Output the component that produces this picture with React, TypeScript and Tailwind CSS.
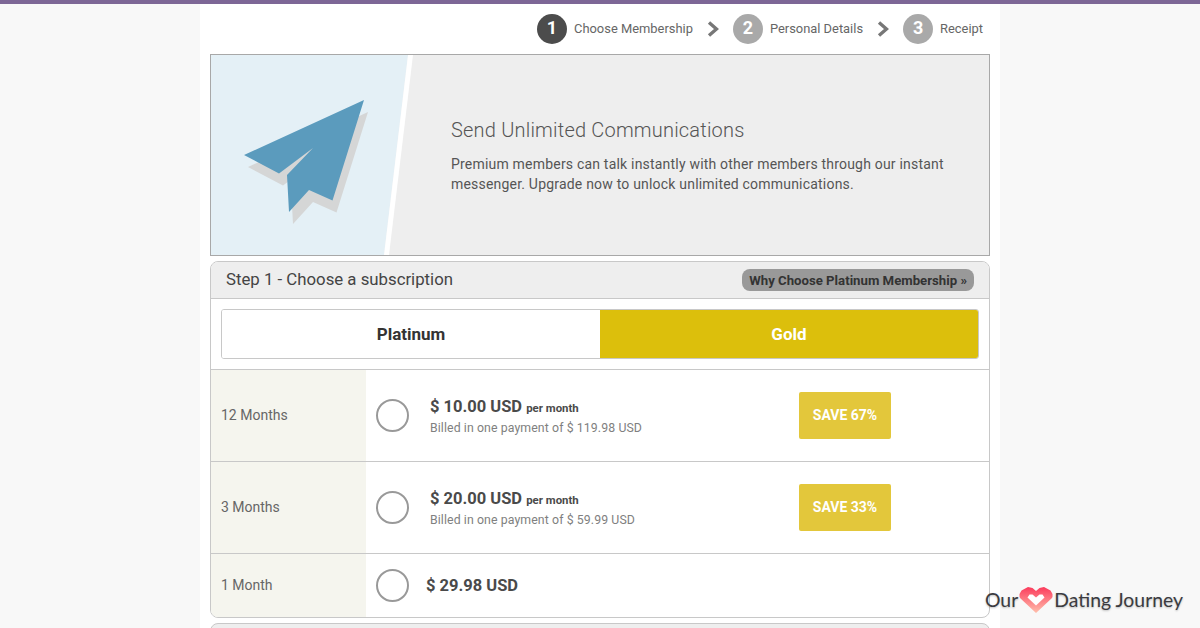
const steps = [
  { n: 1, label: 'Choose Membership', active: true },
  { n: 2, label: 'Personal Details', active: false },
  { n: 3, label: 'Receipt', active: false },
];

const plans = [
  { term: '12 Months', price: '$ 10.00 USD', billed: 'Billed in one payment of $ 119.98 USD', save: 'SAVE 67%' },
  { term: '3 Months', price: '$ 20.00 USD', billed: 'Billed in one payment of $ 59.99 USD', save: 'SAVE 33%' },
];

function Chevron() {
  return (
    <svg width="12" height="16" viewBox="0 0 12 16" className="mx-[14px]">
      <path d="M2 1.5 L9.5 8 L2 14.5" fill="none" stroke="#777" strokeWidth="3.4" />
    </svg>
  );
}

const planePath = 'M153 45 L33 100 L68 118.500 L102 93 L76 120 L78 157 L98 135 L121.500 145.500 Z';

function Plane() {
  return (
    <svg width="240" height="200" viewBox="0 0 240 200" className="shrink-0">
      <polygon points="0,0 197,0 173,200 0,200" fill="#e4f0f6" />
      <polygon points="197,0 202,0 178,200 173,200" fill="#fff" />
      <path d={planePath} fill="#d5d6d6" transform="translate(4 12)" />
      <path d={planePath} fill="#5b9bbd" />
    </svg>
  );
}

function Radio() {
  return <div className="w-[33px] h-[33px] rounded-full border-2 border-[#999] bg-white shrink-0" />;
}

function Logo() {
  return (
    <div className="absolute right-[17px] top-[581px] flex items-center font-['Lato',sans-serif] text-[19.4px] leading-[30px] text-[#3b3b40] [text-shadow:0_1px_2px_rgba(0,0,0,0.25)]">
      <span>Our</span>
      <svg width="34" height="28" viewBox="0 0 34 28" className="mx-[1px]">
        <defs>
          <linearGradient id="heart" x1="0" y1="0" x2="0" y2="1">
            <stop offset="0" stopColor="#fb3b5c" />
            <stop offset="1" stopColor="#ffc0ad" />
          </linearGradient>
        </defs>
        <path
          d="M17 27 L1.5 12.5 Q0 11 0.5 8 L2.5 4.5 L9 1 L13.5 2 L17 5 L20.5 2 L25 1 L31.5 4.5 L33.5 8 Q34 11 32.5 12.5 Z"
          fill="url(#heart)"
        />
        <path d="M17 19.5 L8.5 11.5 L10.5 8.5 L13.5 8.5 L17 11.5 L20.5 8.5 L23.5 8.5 L25.5 11.5 Z" fill="#fff" />
      </svg>
      <span>Dating Journey</span>
    </div>
  );
}

export default function App() {
  return (
    <div className="relative h-[628px] overflow-hidden bg-[#f8f8f8] border-t-4 border-[#7d6796] font-['Roboto',sans-serif] text-[#444]">
      <div className="w-[800px] h-full mx-auto bg-white px-[10px]">
        <div className="h-[50px] flex items-center justify-end pr-[7px]">
          {steps.map((s, i) => (
            <div key={s.n} className="flex items-center">
              {i > 0 && <Chevron />}
              <div
                className={`w-[30px] h-[30px] rounded-full flex items-center justify-center text-white text-[18px] font-bold leading-none pb-[3px] ${
                  s.active ? 'bg-[#4c4c4c]' : 'bg-[#a9a9a9]'
                }`}
              >
                {s.n}
              </div>
              <span className="ml-[7px] text-[12.9px] text-[#666]">{s.label}</span>
            </div>
          ))}
        </div>

        <div className="h-[202px] border border-[#a8a8a8] bg-[#eee] flex items-center">
          <Plane />
          <div className="pt-[2px]">
            <h2 className="text-[20px] font-light leading-[24px] text-[#555] tracking-[0.2px]">Send Unlimited Communications</h2>
            <p className="mt-[12px] w-[510px] text-[14px] leading-[20px] text-[#555] tracking-[0.2px]">
              Premium members can talk instantly with other members through our instant messenger. Upgrade now to unlock unlimited communications.
            </p>
          </div>
        </div>

        <div className="mt-[5px] h-[357px] border border-[#c8c8c8] rounded-[8px] overflow-hidden">
          <div className="h-[37px] bg-[#eee] border-b border-[#c8c8c8] flex items-center justify-between px-[15px]">
            <span className="text-[16.8px] text-[#444]">Step 1 - Choose a subscription</span>
            <span className="h-[22px] px-[7px] flex items-center rounded-[8px] bg-[#999] text-[13.2px] font-bold text-[#333] pt-[1px]">
              Why Choose Platinum Membership »
            </span>
          </div>

          <div className="h-[71px] px-[10px] pt-[10px] border-b border-[#c8c8c8]">
            <div className="h-[50px] flex border border-[#c8c8c8] rounded-[3px] overflow-hidden text-[17px] font-bold">
              <div className="w-1/2 pt-[1px] flex items-center justify-center text-[#333] bg-white">Platinum</div>
              <div className="w-1/2 pt-[1px] flex items-center justify-center text-white bg-[#dcbf0c]">Gold</div>
            </div>
          </div>

          {plans.map((p) => (
            <div key={p.term} className="h-[92px] flex border-b border-[#c8c8c8]">
              <div className="w-[155px] bg-[#f5f5ee] flex items-center pl-[10px] text-[14px] text-[#666]">{p.term}</div>
              <div className="flex-1 flex items-center pl-[10px]">
                <Radio />
                <div className="ml-[21px] w-[369px] pt-[3px]">
                  <div className="text-[16.5px] font-bold leading-[22px] text-[#4a4a4a]">
                    {p.price} <span className="text-[11.4px]">per month</span>
                  </div>
                  <div className="text-[12.3px] leading-[19px] text-[#808080] tracking-[0.1px]">{p.billed}</div>
                </div>
                <div className="w-[92px] h-[47px] rounded-[2px] bg-[#e3c73b] flex items-center justify-center text-[14px] font-bold text-white">
                  {p.save}
                </div>
              </div>
            </div>
          ))}

          <div className="h-[63px] flex">
            <div className="w-[155px] bg-[#f5f5ee] flex items-center pl-[10px] text-[14px] text-[#666]">1 Month</div>
            <div className="flex-1 flex items-center pl-[10px]">
              <Radio />
              <div className="ml-[17px] pt-[1px] text-[16.5px] font-bold text-[#4a4a4a]">$ 29.98 USD</div>
            </div>
          </div>
        </div>

        <div className="mt-[5px] h-[20px] bg-[#eee] border border-[#c8c8c8] rounded-t-[8px]" />
      </div>
      <Logo />
    </div>
  );
}
